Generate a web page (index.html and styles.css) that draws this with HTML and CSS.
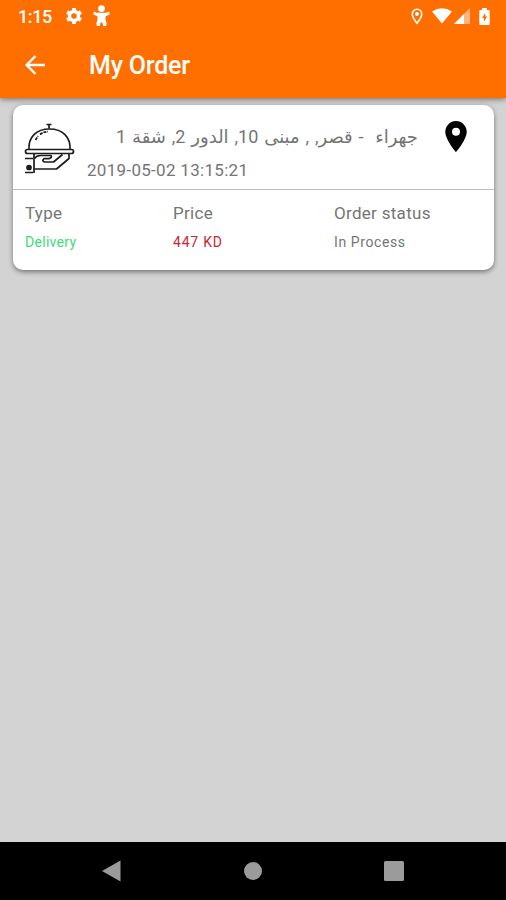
FILE: index.html
```html
<!DOCTYPE html>
<html lang="en">
<head>
<meta charset="utf-8">
<title>My Order</title>
<link rel="stylesheet" href="styles.css">
</head>
<body>
<div class="screen">
  <header class="top">
    <div class="status">
      <span class="clock">1:15</span>
      <svg class="gear" width="18" height="18" viewBox="0 0 18 18"><circle cx="9" cy="9" r="4.500" fill="none" stroke="#fff" stroke-width="3.400"/><path d="M9 1v3M9 14v3M2.100 5l2.600 1.500M13.300 11.500l2.600 1.500M2.100 13l2.600-1.500M13.300 6.500L15.900 5" stroke="#fff" stroke-width="4"/></svg>
      <svg class="figure" width="17" height="22" viewBox="0 0 17 22"><circle cx="8.500" cy="3.600" r="3.400" fill="#fff"/><path fill="#fff" d="M1 6.500l2.600 1.300h9.800L16 6.500l.8 2.700-4.300 2.300v3l1.200 4.200-.7 2.300h-2.700l-1-3.500H7.700l-1 3.500H4l-.7-2.300 1.200-4.200v-3L.2 9.200z"/></svg>
      <span class="spacer"></span>
      <svg class="loc" width="12" height="17" viewBox="0 0 12 17"><path d="M6 1.200a4.700 4.700 0 0 0-4.700 4.700C1.300 9.300 6 15.200 6 15.200s4.700-5.900 4.700-9.300A4.700 4.700 0 0 0 6 1.200z" fill="none" stroke="#fff" stroke-width="1.600"/><circle cx="6" cy="6" r="1.900" fill="#fff"/></svg>
      <svg class="wifi" width="20" height="16" viewBox="0 0 20 16"><path fill="#fff" d="M0 3.500Q10-2.900 20 3.500L10 15.500z"/></svg>
      <svg class="signal" width="16" height="16" viewBox="0 0 16 16"><path fill="#ffb57e" d="M16 0v16H0z"/><path fill="#fff" d="M10 6v10H0z"/></svg>
      <svg class="battery" width="11" height="17" viewBox="0 0 11 18"><path fill="#fff" d="M3 0h5v2h2q1 0 1 1v14q0 1-1 1H1q-1 0-1-1V3q0-1 1-1h2z"/><path fill="#ff6f00" d="M6.300 5L3 10.500h2v4l3.300-5.600H6.300z"/></svg>
    </div>
    <div class="bar">
      <svg class="back" width="21" height="20" viewBox="0 0 21 20"><path d="M20 10H2M10.500 1L1.600 10l8.900 9" fill="none" stroke="#fff" stroke-width="2.400"/></svg>
      <h1 class="title">My Order</h1>
    </div>
  </header>
  <main class="content">
    <section class="card">
      <div class="summary">
        <svg class="dish" width="52" height="53" viewBox="0 0 52 53" fill="none" stroke="#1c1c1c" stroke-width="1.700" stroke-linejoin="round">
          <path d="M22.500 2.500h5M25 2.500v4"/>
          <path d="M5 28C4 15 12.500 7 25.500 7S47 15 46 28"/>
          <path d="M11.500 18l2.500-4M16 12.500q3.500-2.800 8-2.800" stroke-dasharray="3 1"/>
          <rect x="1.500" y="27.500" width="48" height="4" rx="2"/>
          <path d="M1 36.500h8M1 50.500h8M10 32v19M10 47h22.500l12.500-10.500v-5"/>
          <path d="M10.500 36.500q2-3 6-3h10.500q1.500 2-2 3.200h-5q-2.500 2.300.5 3.300h9l9-7.500"/>
          <circle cx="5" cy="45.500" r="2" fill="#1c1c1c"/>
        </svg>
        <div class="details">
          <div class="address" dir="rtl" lang="ar">جهراء &nbsp;- قصر, , مبنى 10, الدور 2, شقة 1</div>
          <div class="date">2019-05-02 13:15:21</div>
        </div>
        <svg class="pin" width="22" height="31" viewBox="0 0 22 31"><path fill="#000" fill-rule="evenodd" d="M11 0A10.700 10.700 0 0 0 .3 10.700C.3 18.700 11 31 11 31s10.700-12.300 10.700-20.300A10.700 10.700 0 0 0 11 0zm0 14.700a4 4 0 1 1 0-8 4 4 0 0 1 0 8z"/></svg>
      </div>
      <div class="facts">
        <div><div class="label">Type</div><div class="value green">Delivery</div></div>
        <div><div class="label">Price</div><div class="value red">447 KD</div></div>
        <div><div class="label">Order status</div><div class="value process">In Process</div></div>
      </div>
    </section>
  </main>
  <nav class="nav">
    <svg width="19" height="22" viewBox="0 0 19 22"><path fill="#9b9b9b" d="M0 11L18.500.5v21z"/></svg>
    <svg width="18" height="18" viewBox="0 0 18 18"><circle cx="9" cy="9" r="9" fill="#9b9b9b"/></svg>
    <svg width="20" height="20" viewBox="0 0 20 20"><rect width="20" height="20" rx="1.500" fill="#9b9b9b"/></svg>
  </nav>
</div>
</body>
</html>
```
FILE: styles.css
```css
* { box-sizing: border-box; }
body { margin: 0; font-family: Roboto, "DejaVu Sans", sans-serif; }
svg { display: block; flex: none; }
.screen { width: 506px; height: 900px; display: flex; flex-direction: column; background: #d3d3d3; overflow: hidden; }
.top { height: 98px; background: #ff6f00; color: #fff; box-shadow: 0 1px 6px rgba(0,0,0,.5); }
.status { height: 32px; display: flex; align-items: center; padding: 0 16px 0 18px; }
.clock { width: 47px; font-size: 18px; font-weight: 500; letter-spacing: -.4px; }
.figure { margin-left: 10px; }
.spacer { flex: 1; }
.wifi { margin-left: 9px; }
.signal { margin-left: 2px; }
.battery { margin-left: 9px; }
.bar { height: 66px; display: flex; align-items: center; padding-left: 25px; }
.title { margin: 2px 0 0 43px; font-size: 25px; font-weight: 500; line-height: 30px; letter-spacing: -.2px; }
.content { flex: 1; padding: 7px 12px 0 13px; }
.card { height: 165px; background: #fff; border-radius: 10px; box-shadow: 0 2px 5px rgba(0,0,0,.45); color: #757575; }
.summary { height: 85px; display: flex; border-bottom: 1px solid #bdbdbd; }
.dish { margin: 17px 0 0 11px; }
.details { width: 331px; margin: 19px 0 0 11px; }
.address { height: 25px; line-height: 25px; font-size: 18px; word-spacing: 1.4px; white-space: nowrap; }
.date { margin-top: 9px; line-height: 25px; font-size: 17px; letter-spacing: .3px; white-space: nowrap; }
.pin { margin: 16px 0 0 27px; }
.facts { display: grid; grid-template-columns: 148px 161px 1fr; padding: 12px 0 0 12px; }
.label { line-height: 22px; font-size: 17px; letter-spacing: .3px; }
.value { margin-top: 8px; line-height: 20px; font-size: 14px; letter-spacing: .3px; }
.green { color: #3ddc76; }
.red { color: #c62832; letter-spacing: .8px; }
.process { letter-spacing: .6px; }
.nav { height: 58px; background: #000; display: flex; align-items: center; justify-content: space-between; padding: 0 102px; }
```
